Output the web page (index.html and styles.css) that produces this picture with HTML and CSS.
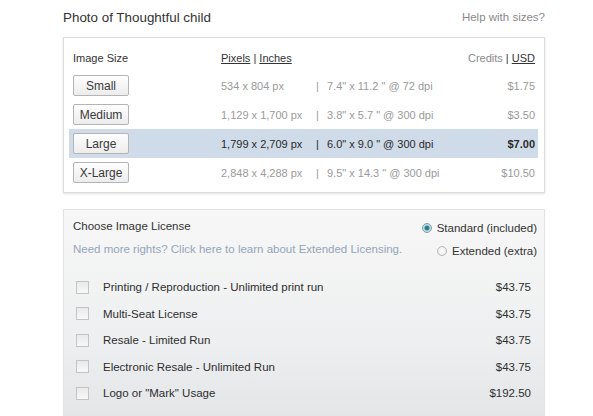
FILE: index.html
```html
<!DOCTYPE html>
<html lang="en">
<head>
    <meta charset="UTF-8">
    <meta name="viewport" content="width=device-width, initial-scale=1.0">
    <title>Photo of Thoughtful child</title>
    <link rel="stylesheet" href="styles.css">
</head>
<body>
    <div class="page">
        <div class="title-row">
            <h3 class="title">Photo of Thoughtful child</h3>
            <a class="help" href="#">Help with sizes?</a>
        </div>

        <div class="sizes">
            <div class="size-head">
                <span class="col-btn">Image Size</span>
                <span class="col-units"><u>Pixels</u> | <u>Inches</u></span>
                <span class="col-price"><span class="muted">Credits</span> | <u>USD</u></span>
            </div>
            <div class="size-row">
                <button class="size-btn">Small</button>
                <span>534 x 804 px</span>
                <span class="sep">|</span>
                <span>7.4" x 11.2 " @ 72 dpi</span>
                <span class="price">$1.75</span>
            </div>
            <div class="size-row">
                <button class="size-btn">Medium</button>
                <span>1,129 x 1,700 px</span>
                <span class="sep">|</span>
                <span>3.8" x 5.7 " @ 300 dpi</span>
                <span class="price">$3.50</span>
            </div>
            <div class="size-row selected">
                <button class="size-btn">Large</button>
                <span>1,799 x 2,709 px</span>
                <span class="sep">|</span>
                <span>6.0" x 9.0 " @ 300 dpi</span>
                <span class="price">$7.00</span>
            </div>
            <div class="size-row">
                <button class="size-btn">X-Large</button>
                <span>2,848 x 4,288 px</span>
                <span class="sep">|</span>
                <span>9.5" x 14.3 " @ 300 dpi</span>
                <span class="price">$10.50</span>
            </div>
        </div>

        <div class="license">
            <div class="license-head">
                <div class="license-left">
                    <div class="license-title">Choose Image License</div>
                    <a class="license-link" href="#">Need more rights? Click here to learn about Extended Licensing.</a>
                </div>
                <div class="license-right">
                    <label class="radio-row"><span class="radio checked"></span>Standard (included)</label>
                    <label class="radio-row"><span class="radio"></span>Extended (extra)</label>
                </div>
            </div>
            <div class="extras">
                <div class="extra-row"><span class="box"></span><span class="extra-name">Printing / Reproduction - Unlimited print run</span><span class="extra-price">$43.75</span></div>
                <div class="extra-row"><span class="box"></span><span class="extra-name">Multi-Seat License</span><span class="extra-price">$43.75</span></div>
                <div class="extra-row"><span class="box"></span><span class="extra-name">Resale - Limited Run</span><span class="extra-price">$43.75</span></div>
                <div class="extra-row"><span class="box"></span><span class="extra-name">Electronic Resale - Unlimited Run</span><span class="extra-price">$43.75</span></div>
                <div class="extra-row"><span class="box"></span><span class="extra-name">Logo or "Mark" Usage</span><span class="extra-price">$192.50</span></div>
            </div>
        </div>
    </div>
</body>
</html>
```

FILE: styles.css
```css
body{
    margin: 0;
    background: #fff;
    font-family: "Liberation Sans", Arial, sans-serif;
    color: #333;
}
.page{
    width: 482px;
    margin-left: 63px;
    padding-top: 10px;
}
.title-row{
    display: flex;
    justify-content: space-between;
    align-items: center;
    height: 16px;
}
.title{
    margin: 0;
    font-size: 13.4px;
    font-weight: normal;
    color: #333;
    line-height: 16px;
}
.help{
    font-size: 11.5px;
    color: #8a8a8a;
    text-decoration: none;
    margin-top: -2px;
}

/* sizes table */
.sizes{
    margin-top: 11px;
    border: 1px solid #dcdcdc;
    box-shadow: 0 1px 2px rgba(0,0,0,0.12);
    padding: 10px 6px 5px 5px;
}
.size-head,
.size-row{
    display: grid;
    grid-template-columns: 148px 95px 11px 1fr auto;
    align-items: center;
    padding: 0 3px 0 4px;
    font-size: 11px;
}
.size-head{
    grid-template-columns: 148px 1fr auto;
    height: 20px;
    margin-bottom: 3px;
    color: #333;
}
.col-units u,
.col-price u{
    text-decoration: underline;
}
.muted{
    color: #8a8a8a;
}
.size-row{
    height: 29px;
    color: #9a9a9a;
}
.size-row.selected{
    background: #cfdbe8;
    color: #2a2a2a;
}
.size-row.selected .price{
    font-weight: bold;
}
.size-btn{
    width: 56px;
    height: 21px;
    padding: 0;
    border: 1px solid #b4b4b4;
    border-radius: 2px;
    background: linear-gradient(#fefefe, #ececec);
    font-family: inherit;
    font-size: 12px;
    color: #3a3a3a;
}
.price{
    text-align: right;
}

/* license panel */
.license{
    margin-top: 16px;
    border: 1px solid #e2e2e2;
    border-bottom: none;
    background: linear-gradient(#f7f7f7, #eeeff0 60%, #e3e4e6);
    padding: 8px 7px 20px 0;
}
.license-head{
    display: flex;
    justify-content: space-between;
    font-size: 11.5px;
}
.license-left{
    padding-left: 9px;
}
.license-title{
    height: 16px;
    line-height: 16px;
    color: #333;
    margin-bottom: 7px;
}
.license-link{
    display: block;
    height: 16px;
    line-height: 16px;
    color: #93a6ba;
    text-decoration: none;
}
.license-right{
    display: flex;
    flex-direction: column;
    align-items: flex-end;
    padding-top: 2px;
}
.radio-row{
    display: flex;
    align-items: center;
    height: 16px;
    margin-bottom: 7px;
    color: #333;
}
.radio{
    width: 8px;
    height: 8px;
    border-radius: 50%;
    border: 1px solid #b8b8b8;
    background: radial-gradient(#ffffff, #e4e4e4);
    margin-right: 5px;
}
.radio.checked{
    border-color: #7f9ea8;
    background: radial-gradient(circle, #1f6f7e 0, #35899a 2px, #b9d6dc 3px, #e6f0f2 5px);
}
.extras{
    margin-top: 8px;
    padding-right: 6px;
}
.extra-row{
    display: flex;
    align-items: center;
    height: 26.5px;
    padding-left: 12px;
    font-size: 11.5px;
    color: #2e2e2e;
}
.box{
    width: 11px;
    height: 11px;
    border: 1px solid #c4c4c4;
    background: linear-gradient(#e9e9e9, #f8f8f8);
    margin-right: 14px;
}
.extra-name{
    flex: 1;
}
.extra-price{
    text-align: right;
}
```
